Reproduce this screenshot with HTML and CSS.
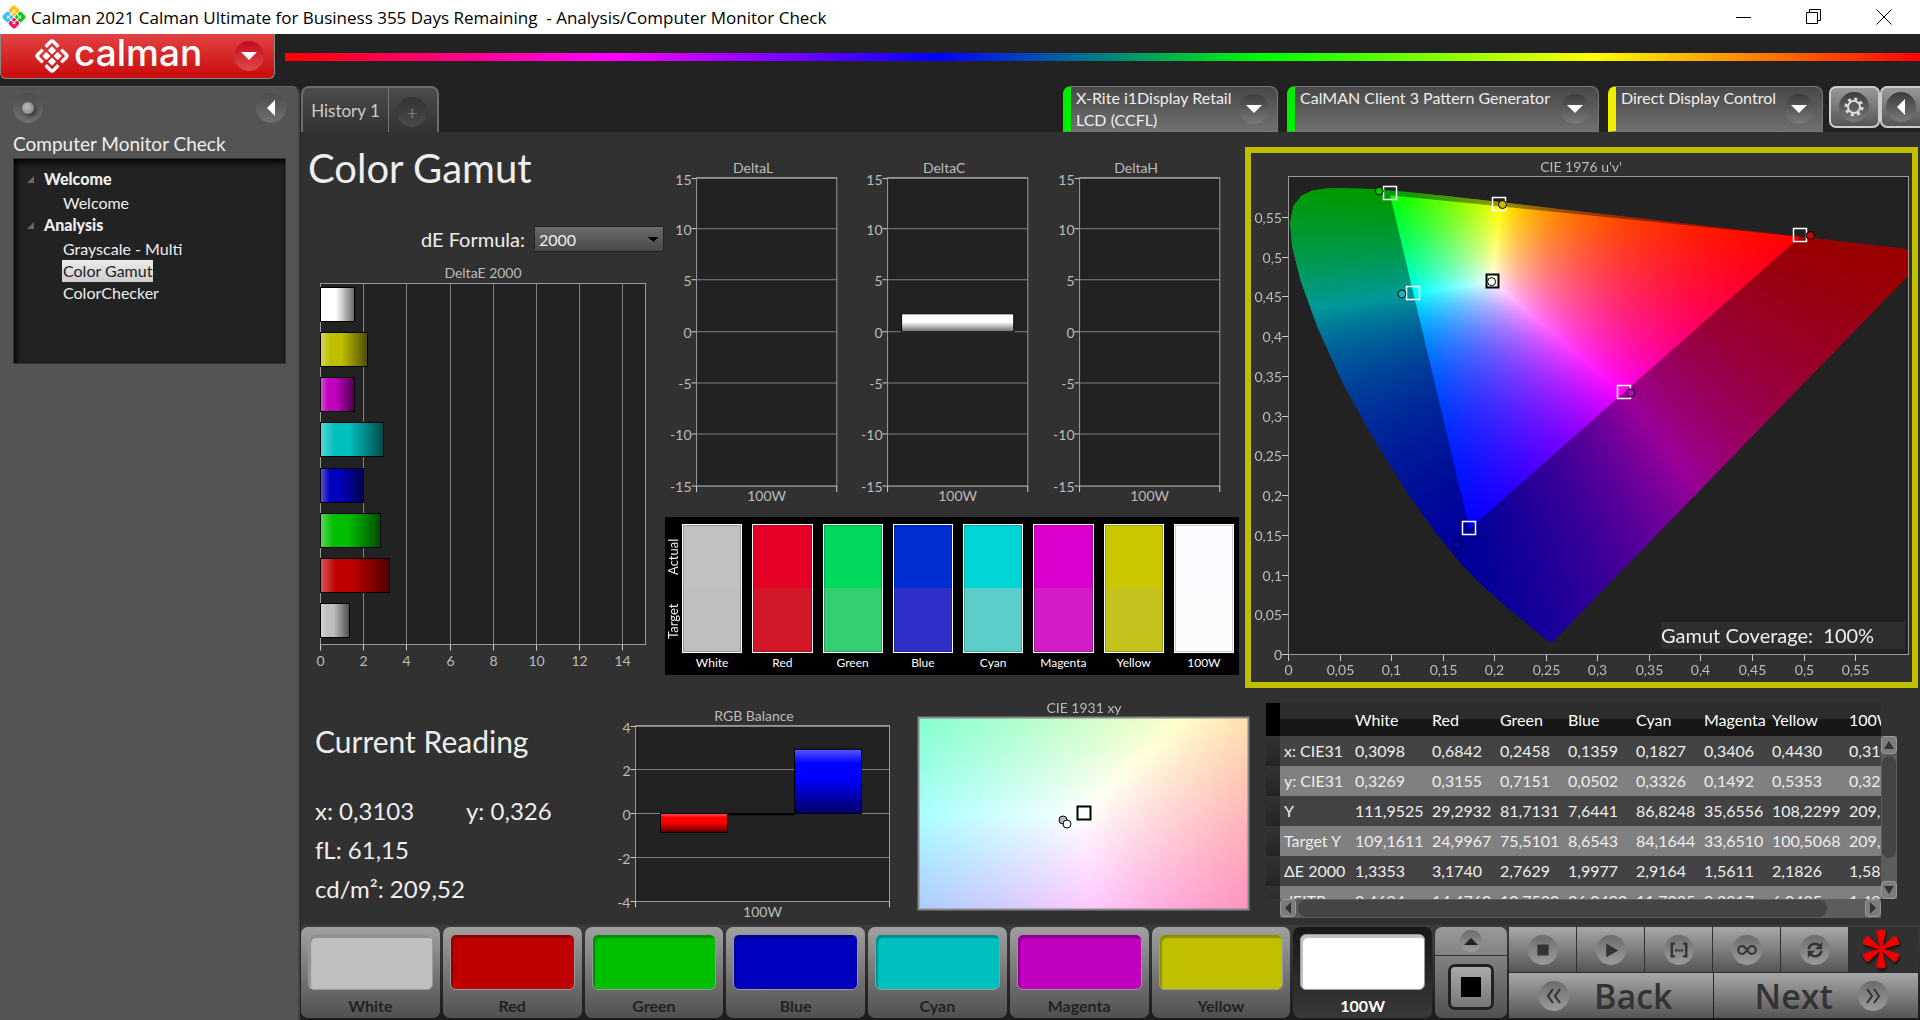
FILE: index.html
```html
<!DOCTYPE html>
<html lang="en">
    <head>
        <meta charset="UTF-8">
        <meta name="viewport" content="width=device-width, initial-scale=1.0">
        <title>Calman 2021 | Computer Monitor Check</title>
        <link rel="stylesheet" href="styles.css">
    </head>
    <body>
        <header class="titlebar">
            <svg class="app-icon" viewBox="0 0 24 24">
                <g transform="rotate(45 12 12)" stroke="#fff" stroke-width=".6">
                    <rect x="3" y="3" width="9" height="9" rx="2" fill="#ffc20e"/>
                    <rect x="12" y="3" width="9" height="9" rx="2" fill="#12c812"/>
                    <rect x="3" y="12" width="9" height="9" rx="2" fill="#36c0f5"/>
                    <rect x="12" y="12" width="9" height="9" rx="2" fill="#f0145a"/>
                    <path d="M8 6v12M16 6v12M6 8h12M6 16h12" stroke-width="1"/>
                </g>
            </svg>
            <span class="window-title">Calman 2021 Calman Ultimate for Business 355 Days Remaining&nbsp; - Analysis/Computer Monitor Check</span>
            <div class="window-buttons">
                <button aria-label="Minimize"><svg viewBox="0 0 16 16"><path d="M0 8.500h15"/></svg></button>
                <button aria-label="Restore"><svg viewBox="0 0 16 16"><path d="M.5 3.500h11v11h-11zM3.500 3.500v-3h11v11h-3"/></svg></button>
                <button aria-label="Close"><svg viewBox="0 0 16 16"><path d="M.5 .5l15 15M15.500 .5l-15 15"/></svg></button>
            </div>
        </header>

        <div class="brandbar">
            <button class="brand">
                <svg class="brand-mark" viewBox="0 0 36 36">
                    <g transform="rotate(45 18 18)" fill="#fff">
                        <rect x="11" y="11" width="6" height="6" rx="1"/>
                        <rect x="19" y="11" width="6" height="6" rx="1"/>
                        <rect x="11" y="19" width="6" height="6" rx="1"/>
                        <rect x="19" y="19" width="6" height="6" rx="1"/>
                        <path d="M7 16V9a2 2 0 0 1 2-2h7M20 7h7a2 2 0 0 1 2 2v7M29 20v7a2 2 0 0 1-2 2h-7M16 29H9a2 2 0 0 1-2-2v-7" fill="none" stroke="#fff" stroke-width="3.500"/>
                    </g>
                </svg>
                <span class="brand-name">calman</span>
                <span class="round round-red"><i class="tri tri-down"></i></span>
            </button>
            <div class="rainbow"></div>
        </div>

        <div class="workspace">
            <aside class="sidebar">
                <div class="sidebar-top">
                    <button class="round round-light" aria-label="Record"><i class="led"></i></button>
                    <button class="round round-light" aria-label="Collapse"><i class="tri tri-left"></i></button>
                </div>
                <h2>Computer Monitor Check</h2>
                <nav class="tree">
                    <h3>Welcome</h3>
                    <ul>
                        <li><a href="#">Welcome</a></li>
                    </ul>
                    <h3>Analysis</h3>
                    <ul>
                        <li><a href="#">Grayscale - Multi</a></li>
                        <li><a href="#" class="active">Color Gamut</a></li>
                        <li><a href="#">ColorChecker</a></li>
                    </ul>
                </nav>
            </aside>

            <main>
                <div class="tabs">
                    <div class="history">
                        <button class="history-tab">History 1</button>
                        <button class="history-add" aria-label="Add history"><span class="round round-dark">+</span></button>
                    </div>
                    <div class="devices">
                        <button class="device meter"><span>X-Rite i1Display Retail<br>LCD (CCFL)</span><i class="round round-dark"><i class="tri tri-down"></i></i></button>
                        <button class="device source"><span>CalMAN Client 3 Pattern Generator</span><i class="round round-dark"><i class="tri tri-down"></i></i></button>
                        <button class="device display"><span>Direct Display Control</span><i class="round round-dark"><i class="tri tri-down"></i></i></button>
                    </div>
                    <div class="tools">
                        <button aria-label="Settings"><span class="round round-dark">
                            <svg viewBox="0 0 20 20"><circle cx="10" cy="10" r="6" fill="none" stroke="#ddd" stroke-width="2"/><circle cx="10" cy="10" r="8" fill="none" stroke="#ddd" stroke-width="3" stroke-dasharray="3 3.280"/></svg>
                        </span></button>
                        <button class="collapse" aria-label="Collapse"><span class="round round-dark"><i class="tri tri-left"></i></span></button>
                    </div>
                </div>

                <div class="row-top">
                    <section class="errors">
                        <h1>Color Gamut</h1>
                        <div class="formula">
                            <label for="formula">dE Formula:</label>
                            <select id="formula">
                                <option>2000</option>
                                <option>1994</option>
                                <option>1976</option>
                            </select>
                        </div>
                        <svg id="delta-e" viewBox="0 0 364 420"></svg>
                    </section>

                    <section class="deltas">
                        <div class="delta-charts">
                            <svg id="delta-l" viewBox="0 0 191 364"></svg>
                            <svg id="delta-c" viewBox="0 0 191 364"></svg>
                            <svg id="delta-h" viewBox="0 0 191 364"></svg>
                        </div>
                        <div class="swatches">
                            <div class="swatch-side"><span>Target</span><span>Actual</span></div>
                            <div class="swatch sw-white"><i></i>White</div>
                            <div class="swatch sw-red"><i></i>Red</div>
                            <div class="swatch sw-green"><i></i>Green</div>
                            <div class="swatch sw-blue"><i></i>Blue</div>
                            <div class="swatch sw-cyan"><i></i>Cyan</div>
                            <div class="swatch sw-magenta"><i></i>Magenta</div>
                            <div class="swatch sw-yellow"><i></i>Yellow</div>
                            <div class="swatch sw-full"><i></i>100W</div>
                        </div>
                    </section>

                    <section class="cie">
                        <canvas id="uv-canvas" width="661" height="529"></canvas>
                        <svg id="uv" viewBox="0 0 661 529"></svg>
                    </section>
                </div>

                <div class="row-bottom">
                    <section class="reading">
                        <h2>Current Reading</h2>
                        <p><span>x: 0,3103</span>y: 0,326</p>
                        <p>fL: 61,15</p>
                        <p>cd/m²: 209,52</p>
                    </section>

                    <svg id="rgb" viewBox="0 0 300 237"></svg>

                    <section class="cie-xy">
                        <canvas id="xy-canvas" width="345" height="237"></canvas>
                        <svg id="xy" viewBox="0 0 345 237"></svg>
                    </section>

                    <section class="data">
                        <div class="data-view">
                            <table>
                                <thead>
                                    <tr><th class="grip"></th><th class="name"></th><th class="wide">White</th><th>Red</th><th>Green</th><th>Blue</th><th>Cyan</th><th>Magenta</th><th class="wide">Yellow</th><th class="wide">100W</th></tr>
                                </thead>
                                <tbody>
                                    <tr><td class="grip"></td><td>x: CIE31</td><td>0,3098</td><td>0,6842</td><td>0,2458</td><td>0,1359</td><td>0,1827</td><td>0,3406</td><td>0,4430</td><td>0,3103</td></tr>
                                    <tr><td class="grip"></td><td>y: CIE31</td><td>0,3269</td><td>0,3155</td><td>0,7151</td><td>0,0502</td><td>0,3326</td><td>0,1492</td><td>0,5353</td><td>0,3260</td></tr>
                                    <tr><td class="grip"></td><td>Y</td><td>111,9525</td><td>29,2932</td><td>81,7131</td><td>7,6441</td><td>86,8248</td><td>35,6556</td><td>108,2299</td><td>209,5230</td></tr>
                                    <tr><td class="grip"></td><td>Target Y</td><td>109,1611</td><td>24,9967</td><td>75,5101</td><td>8,6543</td><td>84,1644</td><td>33,6510</td><td>100,5068</td><td>209,5230</td></tr>
                                    <tr><td class="grip"></td><td>ΔE 2000</td><td>1,3353</td><td>3,1740</td><td>2,7629</td><td>1,9977</td><td>2,9164</td><td>1,5611</td><td>2,1826</td><td>1,5828</td></tr>
                                    <tr><td class="grip"></td><td>dEITP</td><td>2,4694</td><td>14,4760</td><td>10,7530</td><td>26,0490</td><td>11,7025</td><td>9,2317</td><td>6,0485</td><td>1,4820</td></tr>
                                </tbody>
                            </table>
                        </div>
                        <div class="vscroll">
                            <button aria-label="Scroll up"><i class="tri tri-up"></i></button>
                            <div class="thumb"></div>
                            <button aria-label="Scroll down"><i class="tri tri-down"></i></button>
                        </div>
                        <div class="hscroll">
                            <button aria-label="Scroll left"><i class="tri tri-left"></i></button>
                            <div class="thumb"></div>
                            <button aria-label="Scroll right"><i class="tri tri-right"></i></button>
                        </div>
                    </section>
                </div>

                <footer>
                    <div class="patterns">
                        <button class="pattern p-white"><i></i>White</button>
                        <button class="pattern p-red"><i></i>Red</button>
                        <button class="pattern p-green"><i></i>Green</button>
                        <button class="pattern p-blue"><i></i>Blue</button>
                        <button class="pattern p-cyan"><i></i>Cyan</button>
                        <button class="pattern p-magenta"><i></i>Magenta</button>
                        <button class="pattern p-yellow"><i></i>Yellow</button>
                        <button class="pattern p-full selected"><i></i>100W</button>
                    </div>
                    <div class="window-size">
                        <button class="size-up" aria-label="Pattern options"><span class="round round-dark"><i class="tri tri-up"></i></span></button>
                        <button class="size-box" aria-label="Pattern window"><i></i></button>
                    </div>
                    <div class="transport">
                        <div class="transport-row">
                            <button aria-label="Stop"><svg viewBox="0 0 30 30"><path d="M8 8h14v14H8z"/></svg></button>
                            <button aria-label="Play"><svg viewBox="0 0 30 30"><path d="M9 7l15 8.500L9 24z"/></svg></button>
                            <button aria-label="Read series"><svg viewBox="0 0 30 30"><path d="M10 7H6v16h4M20 7h4v16h-4" fill="none" stroke="#333" stroke-width="3"/><path d="M10 14h3v3h-3zM14 14h2v3h-2zM17 14h3v3h-3z"/></svg></button>
                            <button aria-label="Read continuous"><svg viewBox="0 0 30 30"><path d="M15 15c-2-3-4-5-6-5a5 5 0 0 0 0 10c2 0 4-2 6-5s4-5 6-5a5 5 0 0 1 0 10c-2 0-4-2-6-5z" fill="none" stroke="#333" stroke-width="2.500"/></svg></button>
                            <button aria-label="Refresh"><svg viewBox="0 0 30 30"><path d="M7 14a8 8 0 0 1 14-4M23 16a8 8 0 0 1-14 4" fill="none" stroke="#333" stroke-width="3"/><path d="M24 5v9h-9zM6 25v-9h9z"/></svg></button>
                            <svg class="star" viewBox="0 0 44 44">
                                <path d="M22 26l-5-22q5-3 10 0z"/>
                                <path d="M22 26l-5-22q5-3 10 0z" transform="rotate(60 22 22)"/>
                                <path d="M22 26l-5-22q5-3 10 0z" transform="rotate(120 22 22)"/>
                                <path d="M22 26l-5-22q5-3 10 0z" transform="rotate(180 22 22)"/>
                                <path d="M22 26l-5-22q5-3 10 0z" transform="rotate(240 22 22)"/>
                                <path d="M22 26l-5-22q5-3 10 0z" transform="rotate(300 22 22)"/>
                            </svg>
                        </div>
                        <div class="nav-row">
                            <button class="back"><svg viewBox="0 0 30 30"><path d="M14 8l-5 7 5 7M21 8l-5 7 5 7" fill="none" stroke="#333" stroke-width="2"/></svg>Back</button>
                            <button class="next">Next<svg viewBox="0 0 30 30"><path d="M9 8l5 7-5 7M16 8l5 7-5 7" fill="none" stroke="#333" stroke-width="2"/></svg></button>
                        </div>
                    </div>
                </footer>
            </main>
        </div>
        <script src="script.js"></script>
    </body>
</html>
```
FILE: styles.css
```css
* {
    box-sizing: border-box;
    margin: 0;
}

body {
    display: flex;
    flex-direction: column;
    min-height: 100vh;
    background-color: #222;
    color: #eee;
    font-family: Lato, "Open Sans", sans-serif;
    font-size: 16px;
}

button {
    border: 0;
    padding: 0;
    color: inherit;
    font: inherit;
}

svg, canvas {
    display: block;
}

/* window title */
.titlebar {
    display: flex;
    align-items: center;
    height: 34px;
    background-color: #fff;
    color: #000;
    font: 17px "Open Sans", sans-serif;
}

.app-icon {
    width: 24px;
    height: 24px;
    margin: 0 5px 0 2px;
}

.window-title {
    flex: 1;
    white-space: pre;
}

.window-buttons {
    display: flex;
    gap: 54px;
    margin-right: 28px;
}

.window-buttons button {
    background: none;
}

.window-buttons svg {
    width: 16px;
    height: 16px;
    fill: none;
    stroke: #000;
}

/* brand */
.brandbar {
    display: flex;
    height: 52px;
}

.brand {
    display: flex;
    align-items: center;
    width: 275px;
    height: 45px;
    padding: 0 10px 0 33px;
    background: linear-gradient(#e24343, #c90b0b);
    border: solid #888;
    border-width: 0 1px 1px;
    border-radius: 0 0 6px 6px;
    color: #fff;
}

.brand-mark {
    width: 36px;
    height: 36px;
}

.brand-name {
    flex: 1;
    margin-left: 4px;
    padding-bottom: 6px;
    text-align: left;
    font: 500 37px/38px Inter, sans-serif;
}

.rainbow {
    flex: 1;
    height: 8px;
    margin: 19px 0 0 10px;
    background: linear-gradient(to right, #f00, #f0f, #00f, #0f0, #ff0, #f00);
}

/* round icon holders and arrows */
.round {
    display: flex;
    flex: none;
    align-items: center;
    justify-content: center;
    width: 30px;
    height: 30px;
    border-radius: 50%;
}

.round-red {
    background: linear-gradient(#c00b1c, #df4b4b);
}

.round-light {
    background: linear-gradient(#4c4c4c, #707070);
}

.round-dark {
    background: linear-gradient(#3c3c3c, #7a7a7a);
}

.tri {
    width: 0;
    height: 0;
    border: 0 solid transparent;
}

.tri-down {
    border-width: 8px 8px 0;
    border-top-color: #fff;
}

.tri-up {
    border-width: 0 8px 8px;
    border-bottom-color: #222;
}

.tri-left {
    border-width: 8px 8px 8px 0;
    border-right-color: #fff;
}

.tri-right {
    border-width: 6px 0 6px 6px;
    border-left-color: #333;
}

.led {
    width: 12px;
    height: 12px;
    border-radius: 50%;
    background: radial-gradient(circle at 40% 40%, #bbb, #777);
    box-shadow: 2px 2px 4px #333;
}

/* sidebar */
.workspace {
    display: flex;
    flex: 1;
}

.sidebar {
    flex: none;
    width: 300px;
    padding: 6px 12px 6px 13px;
    background-color: #545454;
    border-top: 1px solid #6a6a6a;
    border-right: 2px solid #444;
    border-radius: 0 8px 0 0;
}

.sidebar-top {
    display: flex;
    justify-content: space-between;
}

.sidebar h2 {
    margin: 8px 0 1px;
    font-size: 19px;
    line-height: 26px;
    font-weight: 400;
}

.tree {
    height: 206px;
    padding: 9px 13px;
    background-color: #222;
    border: 1px solid #333;
    box-shadow: inset 2px 3px 6px #000;
}

.tree h3 {
    display: flex;
    align-items: center;
    gap: 10px;
    margin-bottom: 2px;
    font-size: 16px;
    line-height: 22px;
    font-weight: 900;
}

.tree h3::before {
    content: "";
    border: solid transparent;
    border-width: 0 0 7px 7px;
    border-bottom-color: #666;
}

.tree ul {
    padding: 0 0 0 35px;
    list-style: none;
}

.tree a {
    display: inline-block;
    padding: 0 1px;
    color: #eee;
    font-size: 16px;
    line-height: 22px;
    text-decoration: none;
    vertical-align: top;
}

.tree li {
    height: 22px;
}

.tree .active {
    background: linear-gradient(#ececec, #ccc);
    color: #222;
}

/* main area */
main {
    display: flex;
    flex: 1;
    flex-direction: column;
    min-width: 0;
    margin-left: 1px;
    background-color: #313131;
}

.tabs {
    display: flex;
    justify-content: space-between;
    height: 46px;
    background-color: #222;
}

.history {
    display: flex;
    margin-right: auto;
    border: 2px solid #6c6c6c;
    border-bottom: 0;
    border-radius: 8px 8px 0 0;
    background: linear-gradient(#4c4c4c, #323232);
}

.history button {
    background: none;
    color: #ccc;
}

.history-tab {
    width: 85px;
    font-size: 17px;
}

.history .history-add {
    padding: 4px 10px 0 8px;
    border-left: 1px solid #777;
}

.history-add .round {
    background: linear-gradient(#333, #4a4a4a);
    color: #999;
    font-size: 20px;
    font-weight: 300;
}

.devices {
    display: flex;
    gap: 9px;
    margin-right: 6px;
}

.device {
    display: flex;
    justify-content: space-between;
    padding: 0 8px 0 5px;
    border: 1px solid #777;
    border-left: 8px solid #0e0;
    border-radius: 8px 8px 0 0;
    background: linear-gradient(#484848, #707070);
    font-size: 16px;
    line-height: 22px;
    text-align: left;
}

.device .round {
    margin-top: 7px;
}

.meter {
    width: 215px;
}

.source {
    width: 312px;
}

.display {
    width: 215px;
    border-left-color: #ee0;
}

.tools {
    display: flex;
    height: 42px;
    margin-right: -11px;
    overflow: hidden;
}

.tools button {
    width: 51px;
    padding-left: 8px;
    border: 2px solid #ccc;
    border-radius: 7px;
    background: linear-gradient(#999, #555);
}

.tools .collapse {
    padding-left: 4px;
}

.tools svg {
    width: 20px;
    height: 20px;
}

.row-top {
    display: grid;
    grid-template-columns: 364fr 579fr 676fr;
}

.row-bottom {
    display: grid;
    grid-template-columns: 305fr 300fr 345fr 669fr;
}

/* delta E */
.errors {
    padding-top: 11px;
}

h1 {
    padding-left: 7px;
    font-size: 40px;
    line-height: 50px;
    font-weight: 400;
}

.formula {
    display: flex;
    align-items: center;
    justify-content: flex-end;
    gap: 9px;
    margin: 33px 1px 6px 0;
    font-size: 20px;
    line-height: 26px;
}

select {
    width: 130px;
    height: 26px;
    padding: 0 4px;
    appearance: none;
    border: 1px solid #222;
    background: linear-gradient(to bottom left, #000 50%, transparent 50%) 113px 10px / 5px 5px no-repeat, linear-gradient(to bottom right, #000 50%, transparent 50%) 118px 10px / 5px 5px no-repeat, linear-gradient(#6c6c6c, #484848);
    color: #eee;
    font: 16px Lato, sans-serif;
}

/* charts */
svg text {
    fill: #bbb;
    font-size: 14px;
}

svg .mid {
    text-anchor: middle;
}

svg .end {
    text-anchor: end;
}

svg .coverage {
    fill: #eee;
    font-size: 20px;
    white-space: pre;
}

.deltas {
    padding: 20px 5px 0 0;
}

.delta-charts {
    display: grid;
    grid-template-columns: 1fr 1fr 1fr;
}

.swatches {
    display: flex;
    gap: 10px;
    height: 158px;
    padding: 7px 5px 0 1px;
    background-color: #000;
}

.swatch-side {
    display: flex;
    justify-content: space-around;
    width: 15px;
    height: 129px;
    margin-right: -9px;
    writing-mode: vertical-rl;
    transform: rotate(180deg);
    font-size: 13px;
    line-height: 15px;
}

.swatch {
    flex: 1;
    color: #fff;
    font-size: 12px;
    line-height: 20px;
    text-align: center;
}

.swatch i {
    display: block;
    height: 129px;
    border: 1px solid #fff;
    background: linear-gradient(var(--actual) 50%, var(--target) 50%);
    box-shadow: inset 0 0 0 1px rgba(0, 0, 0, 0.2);
}

.sw-white { --actual: #c0c1c3; --target: #bfbfbf; }
.sw-red { --actual: #e60026; --target: #d21728; }
.sw-green { --actual: #00d95c; --target: #33cf70; }
.sw-blue { --actual: #002dd2; --target: #3030c8; }
.sw-cyan { --actual: #00d5d5; --target: #5ccec9; }
.sw-magenta { --actual: #dc00d0; --target: #d21cc8; }
.sw-yellow { --actual: #cbc800; --target: #c4c31e; }
.sw-full { --actual: #fbfcff; --target: #fcfcfc; }

.cie {
    position: relative;
    align-self: start;
    margin: 15px 2px 0 1px;
    border: 6px solid #bfbf00;
}

.cie canvas, .cie-xy canvas {
    width: 100%;
}

.cie svg, .cie-xy svg {
    position: absolute;
    top: 0;
    left: 0;
    width: 100%;
}

.cie-xy {
    position: relative;
}

/* current reading */
.reading {
    padding: 34px 0 0 14px;
    font-size: 24px;
    line-height: 39px;
    white-space: nowrap;
}

.reading h2 {
    margin-bottom: 31px;
    font-size: 30px;
    line-height: 38px;
    font-weight: 400;
}

.reading span {
    display: inline-block;
    width: 151px;
}

/* data table */
.data {
    display: grid;
    grid-template-columns: 1fr 16px;
    grid-template-rows: 196px 19px;
    margin: 15px 23px 0 15px;
}

.data-view {
    overflow: hidden;
}

table {
    width: 656px;
    table-layout: fixed;
    border-collapse: collapse;
    font-size: 16px;
}

th {
    width: 68px;
    height: 33px;
    padding: 0 4px;
    background: linear-gradient(#2c2c2c 50%, #171717 50%);
    color: #fff;
    font-weight: 400;
    text-align: left;
}

td {
    height: 30px;
    padding: 0 4px 1px;
    white-space: nowrap;
}

tr {
    background-color: #434343;
}

tbody tr:nth-child(even) {
    background-color: #808080;
}

th.grip {
    width: 14px;
    background: #000;
}

td.grip {
    background: linear-gradient(#333, #242424);
}

.name {
    width: 71px;
}

.wide {
    width: 77px;
}

.vscroll, .hscroll {
    display: flex;
    background-color: #5c5c5c;
}

.vscroll {
    flex-direction: column;
    margin-top: 33px;
}

.hscroll {
    margin-left: 14px;
}

.vscroll button, .hscroll button {
    display: flex;
    align-items: center;
    justify-content: center;
    width: 16px;
    height: 18px;
    border: 1px solid #999;
    border-radius: 4px;
    background-color: #7c7c7c;
}

.data .tri-up {
    border-width: 0 5px 8px;
    border-bottom-color: #333;
}

.data .tri-down {
    border-width: 8px 5px 0;
    border-top-color: #333;
}

.data .tri-left {
    border-width: 6px 6px 6px 0;
    border-right-color: #333;
}

.thumb {
    border-radius: 8px;
    background-color: #444;
}

.vscroll .thumb {
    width: 14px;
    height: 102px;
    margin: 2px 1px auto;
}

.hscroll .thumb {
    width: 529px;
    height: 17px;
    margin: 1px auto 1px 2px;
}

/* bottom bar */
footer {
    display: flex;
    flex: 1;
    min-height: 95px;
    padding: 2px 2px 2px 0;
    background: linear-gradient(#3c3c3c, #1c1c1c);
}

.patterns {
    display: grid;
    flex: 1;
    grid-template-columns: repeat(8, 1fr);
    gap: 3px;
    margin-right: 3px;
}

.pattern {
    display: flex;
    flex-direction: column;
    align-items: center;
    justify-content: space-between;
    padding: 7px 7px 0;
    border-radius: 7px;
    background: linear-gradient(#a0a0a0, #505050);
    color: #222;
    font-size: 16px;
    line-height: 24px;
    font-weight: 700;
}

.pattern i {
    width: 100%;
    height: 56px;
    border: 1px solid #999;
    border-radius: 6px;
    box-shadow: inset 2px 3px 1px rgba(0, 0, 0, 0.25);
}

.pattern.selected {
    background: linear-gradient(#181818, #383838);
    color: #fff;
}

.p-white i { background-color: #bfbfbf; }
.p-red i { background-color: #bf0000; }
.p-green i { background-color: #00bf00; }
.p-blue i { background-color: #0000bf; }
.p-cyan i { background-color: #00bfbf; }
.p-magenta i { background-color: #bf00bf; }
.p-yellow i { background-color: #bfbf00; }
.p-full i { background-color: #fff; }

.window-size {
    display: flex;
    flex-direction: column;
    width: 72px;
    margin-right: 2px;
    border-radius: 7px;
    background: linear-gradient(#999, #505050);
}

.window-size button {
    display: flex;
    align-items: center;
    justify-content: center;
    background: none;
}

.size-up {
    height: 28px;
}

.size-up .round {
    width: 22px;
    height: 22px;
    background: linear-gradient(#6c6c6c, #9c9c9c);
}

.size-up .tri {
    border-width: 0 7px 7px;
}

.window-size .size-box {
    flex: 1;
    border-top: 1px solid #333;
}

.size-box i {
    width: 46px;
    height: 46px;
    border: 3px solid #222;
    border-radius: 7px;
    background: linear-gradient(#000, #000) center / 20px 20px no-repeat, linear-gradient(#aaa, #777);
}

.transport {
    display: flex;
    flex-direction: column;
    gap: 1px;
    width: 409px;
}

.transport-row, .nav-row {
    display: flex;
    flex: 1;
    gap: 1px;
}

.transport-row {
    background-color: #313131;
}

.transport button {
    display: flex;
    align-items: center;
    justify-content: center;
    background: linear-gradient(#a8a8a8, #555);
}

.transport-row button {
    width: 67px;
}

.transport button svg {
    width: 30px;
    height: 30px;
    border-radius: 50%;
    background: linear-gradient(#6c6c6c, #9c9c9c);
    fill: #333;
}

.transport-row button svg {
    padding: 3px;
}

.star {
    width: 44px;
    height: 44px;
    margin: 0 15px 0 auto;
    fill: #e00;
    filter: drop-shadow(1px 2px 1px #111);
}

.nav-row button {
    flex: 1;
    gap: 25px;
    padding: 0 30px;
    color: #333;
    font: 600 34px/40px "Open Sans", sans-serif;
}

.nav-row .back {
    justify-content: flex-start;
}

.nav-row .next {
    justify-content: flex-end;
}
```
FILE: script.js
```js
var NS = "http://www.w3.org/2000/svg";

function add(parent, name, attrs, text) {
    var node = document.createElementNS(NS, name);
    for (var key in attrs)
        node.setAttribute(key, attrs[key]);
    if (text !== undefined)
        node.textContent = text;
    parent.appendChild(node);
    return node;
}

function line(svg, x1, y1, x2, y2, color) {
    add(svg, "path", { d: "M" + x1 + " " + y1 + "L" + x2 + " " + y2, stroke: color || "#808080", "stroke-width": 1 });
}

// light-to-dark sheen laid over every bar
function addShade(svg, vertical) {
    var id = svg.id + "-shade";
    var grad = add(add(svg, "defs", {}), "linearGradient", { id: id, x1: 0, y1: 0, x2: vertical ? 0 : 1, y2: vertical ? 1 : 0 });
    add(grad, "stop", { offset: 0, "stop-color": "#fff", "stop-opacity": 0.35 });
    add(grad, "stop", { offset: 0.22, "stop-color": "#fff", "stop-opacity": 0 });
    add(grad, "stop", { offset: 0.45, "stop-color": "#000", "stop-opacity": 0 });
    add(grad, "stop", { offset: 1, "stop-color": "#000", "stop-opacity": 0.6 });
    return "url(#" + id + ")";
}

function bar(svg, x, y, w, h, color, shade) {
    add(svg, "rect", { x: x, y: y, width: w, height: h, fill: color });
    add(svg, "rect", { x: x, y: y, width: w, height: h, fill: shade, stroke: "#000" });
}

function columnChart(id, o) {
    var svg = document.getElementById(id);
    var shade = addShade(svg, true);
    var right = o.x + o.w, bottom = o.y + o.h;
    add(svg, "rect", { x: o.x, y: o.y, width: o.w, height: o.h, fill: "#222" });
    add(svg, "text", { x: o.titleX, y: o.y - 5, "class": "mid" }, o.title);
    for (var v = -o.max; v <= o.max; v += o.step) {
        var y = Math.round(o.y + o.h * (o.max - v) / (2 * o.max)) - 0.5;
        if (v == o.max) y = o.y + 1;
        line(svg, o.x, y, right, y);
        line(svg, o.x - 5, y, o.x, y, "#ccc");
        add(svg, "text", { x: o.x - 5, y: y + 6, "class": "end" }, v);
    }
    add(svg, "rect", { x: o.x, y: o.y, width: o.w, height: o.h, fill: "none", stroke: "#999" });
    line(svg, o.x, bottom, o.x, bottom + 6, "#ccc");
    line(svg, right, bottom, right, bottom + 6, "#ccc");
    add(svg, "text", { x: o.x + o.w / 2, y: bottom + 15, "class": "mid" }, "100W");
    var zero = o.y + o.h / 2;
    o.bars.forEach(function (b) {
        var h = Math.abs(b.value) * o.h / (2 * o.max);
        bar(svg, o.x + b.x, b.value > 0 ? zero - h : zero, b.w, h, b.color, shade);
    });
}

var delta = { x: 31.5, y: 25.5, w: 140, h: 308, max: 15, step: 5, titleX: 88 };
columnChart("delta-l", Object.assign({}, delta, { title: "DeltaL", bars: [{ x: 14, w: 112, value: 0, color: "#000" }] }));
columnChart("delta-c", Object.assign({}, delta, { title: "DeltaC", bars: [{ x: 14, w: 112, value: 1.75, color: "#fff" }] }));
columnChart("delta-h", Object.assign({}, delta, { title: "DeltaH", bars: [{ x: 14, w: 112, value: 0, color: "#000" }] }));
columnChart("rgb", {
    x: 29.5, y: 37.5, w: 254, h: 176, max: 4, step: 2, titleX: 148, title: "RGB Balance",
    bars: [
        { x: 25, w: 67, value: -0.85, color: "#f00" },
        { x: 92, w: 67, value: -0.06, color: "#000" },
        { x: 159, w: 67, value: 2.92, color: "#00f" }
    ]
});

function deltaEChart() {
    var svg = document.getElementById("delta-e");
    var shade = addShade(svg, false);
    var x0 = 19.5, y0 = 25.5, w = 325, h = 361, unit = 21.6;
    var rows = [
        [1.583, "#fff"], [2.183, "#bfbf00"], [1.561, "#bf00bf"], [2.916, "#00bfbf"],
        [1.998, "#0000bf"], [2.763, "#00bf00"], [3.174, "#bf0000"], [1.335, "#bfbfbf"]
    ];
    add(svg, "rect", { x: x0, y: y0, width: w, height: h, fill: "#222" });
    add(svg, "text", { x: 182, y: 20, "class": "mid" }, "DeltaE 2000");
    for (var v = 0; v < 15; v += 2) {
        var x = Math.floor(x0 + v * unit) + 0.5;
        line(svg, x, y0, x, y0 + h);
        line(svg, x, y0 + h, x, y0 + h + 6, "#ccc");
        add(svg, "text", { x: x, y: y0 + h + 21, "class": "mid" }, v);
    }
    add(svg, "rect", { x: x0, y: y0, width: w, height: h, fill: "none", stroke: "#999" });
    rows.forEach(function (row, i) {
        bar(svg, x0, 29.5 + Math.round(i * h / 8), Math.round(row[0] * unit), 34, row[1], shade);
    });
}
deltaEChart();

/* chromaticity diagrams */
var LOCUS = [
    [.1741, .0050], [.1733, .0048], [.1714, .0051], [.1689, .0069], [.1644, .0109], [.1566, .0177],
    [.1440, .0297], [.1355, .0399], [.1241, .0578], [.1096, .0868], [.0913, .1327], [.0687, .2007],
    [.0454, .2950], [.0235, .4127], [.0082, .5384], [.0039, .6548], [.0139, .7502], [.0389, .8120],
    [.0743, .8338], [.1142, .8262], [.1547, .8059], [.2296, .7543], [.3016, .6923], [.3731, .6245],
    [.4441, .5547], [.5125, .4866], [.5752, .4242], [.6270, .3725], [.6658, .3340], [.6915, .3083],
    [.7190, .2809], [.7347, .2653]
];

// linear display colour of a chromaticity, scaled so that the largest channel is 1
function xyToRgb(x, y, m) {
    var X = x / y, Z = (1 - x - y) / y;
    var rgb = m.map(function (r) { return Math.max(0, r[0] * X + r[1] + r[2] * Z); });
    var top = Math.max(rgb[0], rgb[1], rgb[2]);
    return rgb.map(function (c) { return c / top; });
}

var P3 = [[2.4935, -.9314, -.4027], [-.8295, 1.7627, .0236], [.0358, -.0762, .9569]];
var SRGB = [[3.2406, -1.5372, -.4986], [-.9689, 1.8758, .0415], [.0557, -.2040, 1.0570]];

function paint(width, height, colorAt) {
    var canvas = document.createElement("canvas");
    canvas.width = width;
    canvas.height = height;
    var ctx = canvas.getContext("2d");
    var img = ctx.createImageData(width, height);
    for (var j = 0; j < height; j++) {
        for (var i = 0; i < width; i++) {
            var c = colorAt(i + 0.5, j + 0.5), p = 4 * (j * width + i);
            img.data[p] = 255 * c[0];
            img.data[p + 1] = 255 * c[1];
            img.data[p + 2] = 255 * c[2];
            img.data[p + 3] = 255;
        }
    }
    ctx.putImageData(img, 0, 0);
    return canvas;
}

function uvX(u) { return 37.5 + u * 1031; }
function uvY(v) { return 501.5 - v * 795; }

function tracePath(ctx, points) {
    ctx.beginPath();
    points.forEach(function (p) { ctx.lineTo(uvX(p[0]), uvY(p[1])); });
    ctx.closePath();
}

function drawUv() {
    var ctx = document.getElementById("uv-canvas").getContext("2d");
    ctx.fillStyle = "#222";
    ctx.fillRect(37, 23, 621, 479);
    var colors = paint(661, 529, function (px, py) {
        var u = (px - 37.5) / 1031, v = Math.max(0.01, (501.5 - py) / 795);
        // the magenta ridge bends down outside the target triangle
        var out = (u - 0.1754) * 0.753 - (v - 0.1579) * 0.658;
        if (out > 0) v += 0.3 * out;
        var d = 6 * u - 16 * v + 12;
        return xyToRgb(9 * u / d, 4 * v / d, P3);
    });
    ctx.save();
    ctx.beginPath();
    ctx.rect(38, 24, 619, 477);
    ctx.clip();
    tracePath(ctx, LOCUS.map(function (p) {
        var d = -2 * p[0] + 12 * p[1] + 3;
        return [4 * p[0] / d, 9 * p[1] / d];
    }));
    ctx.clip();
    ctx.drawImage(colors, 0, 0);
    ctx.fillStyle = "rgba(0, 0, 0, 0.4)";
    ctx.fillRect(0, 0, 661, 529);
    tracePath(ctx, [[.4964, .5255], [.0986, .5777], [.1754, .1579]]);
    ctx.clip();
    ctx.drawImage(colors, 0, 0);
    ctx.restore();

    var svg = document.getElementById("uv");
    add(svg, "rect", { x: 37.5, y: 23.5, width: 620, height: 478, fill: "none", stroke: "#999" });
    add(svg, "text", { x: 330, y: 19, "class": "mid" }, "CIE 1976 u'v'");
    for (var i = 0; i < 12; i++) {
        var label = String(i * 5 / 100).replace(".", ",");
        var x = Math.floor(uvX(i / 20)) + 0.5, y = Math.floor(uvY(i / 20)) + 0.5;
        line(svg, x, 502, x, 508, "#ccc");
        line(svg, 31, y, 37, y, "#ccc");
        add(svg, "text", { x: x, y: 522, "class": "mid" }, label);
        add(svg, "text", { x: 31, y: y + 5, "class": "end" }, label);
    }
    var targets = [[.0986, .580], [.2046, .567], [.4964, .528], [.1208, .455], [.3255, .330], [.1754, .1595]];
    targets.forEach(function (t) {
        add(svg, "rect", { x: Math.round(uvX(t[0])) - 6.5, y: Math.round(uvY(t[1])) - 6.5, width: 13, height: 13, fill: "none", stroke: "#fff", "stroke-width": 1.5 });
    });
    add(svg, "rect", { x: 235.5, y: 121.5, width: 12, height: 13, fill: "none", stroke: "#000", "stroke-width": 2 });
    var readings = [
        [.0880, .5830, "#00bf00"], [.2075, .5660, "#bfbf00"], [.5060, .5270, "#bf0000"],
        [.1100, .4535, "#00bfbf"], [.3320, .3290, "#bf00bf"], [.1635, .1380, "#0000bf"], [.1970, .4690, "#fff"]
    ];
    readings.forEach(function (r) {
        add(svg, "circle", { cx: uvX(r[0]), cy: uvY(r[1]), r: 4, fill: r[2], stroke: "#000" });
    });
    add(svg, "rect", { x: 410, y: 469, width: 244, height: 27, fill: "#2e2e2e" });
    add(svg, "text", { x: 410, y: 490, "class": "coverage" }, "Gamut Coverage:  100%");
}
drawUv();

function drawXy() {
    var ctx = document.getElementById("xy-canvas").getContext("2d");
    var colors = paint(330, 192, function (px, py) {
        return xyToRgb(.3127 + (px / 330 - .5) * .05, .3290 + (.5 - py / 192) * .05, SRGB);
    });
    ctx.drawImage(colors, 13, 30);
    var svg = document.getElementById("xy");
    add(svg, "rect", { x: 12.5, y: 29.5, width: 330, height: 192, fill: "none", stroke: "#888", "stroke-width": 2 });
    add(svg, "text", { x: 178, y: 25, "class": "mid" }, "CIE 1931 xy");
    add(svg, "rect", { x: 171.5, y: 118.5, width: 13, height: 13, fill: "#fff", stroke: "#000", "stroke-width": 2 });
    add(svg, "circle", { cx: 157, cy: 132, r: 4, fill: "#bbb", stroke: "#000" });
    add(svg, "circle", { cx: 161, cy: 136, r: 4, fill: "#fff", stroke: "#000" });
}
drawXy();
```
